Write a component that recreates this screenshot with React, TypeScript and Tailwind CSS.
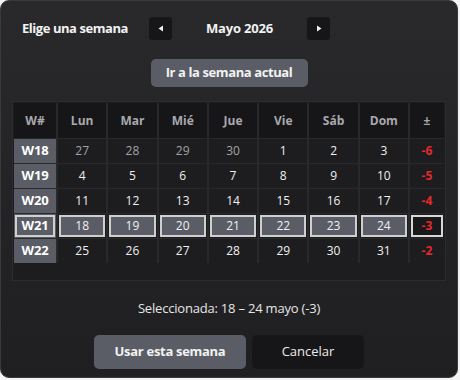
import React from "react";

const rows = [
  { w: "W18", days: [27, 28, 29, 30, 1, 2, 3], prev: 4, d: "-6" },
  { w: "W19", days: [4, 5, 6, 7, 8, 9, 10], prev: 0, d: "-5" },
  { w: "W20", days: [11, 12, 13, 14, 15, 16, 17], prev: 0, d: "-4" },
  { w: "W21", days: [18, 19, 20, 21, 22, 23, 24], prev: 0, d: "-3", sel: true },
  { w: "W22", days: [25, 26, 27, 28, 29, 30, 31], prev: 0, d: "-2" },
];
const heads = ["Lun", "Mar", "Mié", "Jue", "Vie", "Sáb", "Dom"];

export default function App() {
  return (
    <div
      className="w-[460px] h-[380px] bg-[#f3f3f3] overflow-hidden"
      style={{ fontFamily: '"Open Sans", "Noto Sans", sans-serif' }}
    >
      <div className="w-[458px] h-[378px] rounded-[9px] border border-[#3a3a3c] bg-gradient-to-b from-[#29292b] to-[#1f1f21] flex flex-col">
        <div className="flex items-center h-[23px] mt-[16px] pl-[21px]">
          <div className="w-[127px] text-[13px] font-bold text-[#f2f2f2] tracking-[-0.45px]">Elige una semana</div>
          <button className="w-[23px] h-[23px] rounded-[3px] bg-[#161618] flex items-center justify-center">
            <svg width="6" height="7" viewBox="0 0 6 7"><path d="M5 0.5 L0.5 3.5 L5 6.5Z" fill="#f0f0f0" /></svg>
          </button>
          <div className="w-[135px] text-center text-[13px] font-bold text-[#f2f2f2] tracking-[-0.2px]">Mayo 2026</div>
          <button className="w-[23px] h-[23px] rounded-[3px] bg-[#161618] flex items-center justify-center">
            <svg width="6" height="7" viewBox="0 0 6 7"><path d="M1 0.5 L5.5 3.5 L1 6.5Z" fill="#f0f0f0" /></svg>
          </button>
        </div>
        <div className="flex justify-center mt-[19px]">
          <button className="w-[157px] h-[28px] rounded-[5px] bg-[#5b5d66] text-[13px] font-bold text-[#f2f2f2] tracking-[-0.4px]">
            Ir a la semana actual
          </button>
        </div>
        <div className="mx-[11px] mt-[14px] h-[180px] border border-[#2c2c2e] bg-[#1d1d1f] p-px">
          <div className="grid grid-cols-[42px_repeat(7,1fr)_34px] gap-x-[2px] gap-y-px bg-[#29292b]">
            <div className="h-[35px] bg-[#161618] flex items-center justify-center text-[12px] font-bold text-[#a9a9ad]">W#</div>
            {heads.map((h) => (
              <div key={h} className="h-[35px] bg-[#161618] flex items-center justify-center text-[12px] font-bold text-[#a9a9ad]">{h}</div>
            ))}
            <div className="h-[35px] bg-[#161618] flex items-center justify-center text-[12px] font-bold text-[#a9a9ad]">±</div>
            {rows.map((r) => (
              <React.Fragment key={r.w}>
                <div className="h-[24px] bg-[#5b5d66] flex items-center justify-center">
                  {r.sel ? (
                    <div className="w-[40px] h-[22px] border-2 border-[#cfcfcf] flex items-center justify-center text-[13px] font-bold text-white tracking-[-0.2px]">{r.w}</div>
                  ) : (
                    <span className="text-[13px] font-bold text-white tracking-[-0.2px]">{r.w}</span>
                  )}
                </div>
                {r.days.map((d, i) => (
                  <div key={i} className="h-[24px] bg-[#1d1d1f] flex items-center justify-center">
                    {r.sel ? (
                      <div className="w-[calc(100%-2px)] h-[22px] border-2 border-[#cfcfcf] bg-[#5b5d66] flex items-center justify-center text-[12px] text-[#f0f0f0]">{d}</div>
                    ) : (
                      <span className={`text-[12px] ${i < r.prev ? "text-[#a3a3a7]" : "text-[#f0f0f0]"}`}>{d}</span>
                    )}
                  </div>
                ))}
                <div className="h-[24px] bg-[#1d1d1f] flex items-center justify-center">
                  {r.sel ? (
                    <div className="w-[32px] h-[22px] border-2 border-[#d8d8d8] bg-[#19191b] flex items-center justify-center text-[12px] font-bold text-[#e5282c]">{r.d}</div>
                  ) : (
                    <span className="text-[12px] font-bold text-[#e5282c]">{r.d}</span>
                  )}
                </div>
              </React.Fragment>
            ))}
          </div>
        </div>
        <div className="mt-[18px] text-center text-[13px] text-[#e6e6e6] tracking-[-0.2px]">Seleccionada: 18 – 24 mayo (-3)</div>
        <div className="flex justify-center gap-[6px] mt-[16px]">
          <button className="w-[152px] h-[34px] rounded-[5px] bg-[#5b5d66] text-[13px] font-bold text-[#f2f2f2] tracking-[-0.3px]">Usar esta semana</button>
          <button className="w-[112px] h-[34px] rounded-[5px] bg-[#161618] text-[13px] text-[#ececec]">Cancelar</button>
        </div>
      </div>
    </div>
  );
}
